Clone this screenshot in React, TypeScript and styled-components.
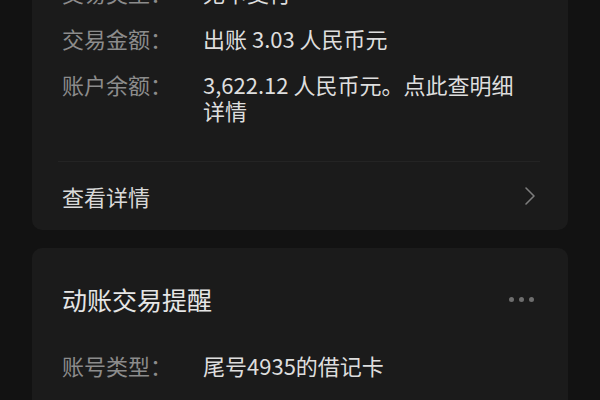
import styled, { createGlobalStyle } from "styled-components";

const GlobalStyle = createGlobalStyle`
  html, body {
    margin: 0;
    padding: 0;
    background: #121212;
  }
  body {
    font-family: "Noto Sans CJK SC", "Noto Sans", sans-serif;
    -webkit-font-smoothing: antialiased;
  }
`;

const Page = styled.div`
  width: 600px;
  height: 400px;
  overflow: hidden;
  background: #121212;
  padding: 0 32px;
  box-sizing: border-box;
  display: flex;
  flex-direction: column;
  gap: 18px;
`;

const Card = styled.section<{ $clipped?: boolean }>`
  background: #1b1b1b;
  border-radius: 10px;
  padding: ${(p) => (p.$clipped ? "0 30px 0" : "36px 30px 60px")};
  margin-top: ${(p) => (p.$clipped ? "-21px" : "0")};
  display: flex;
  flex-direction: column;
  flex-shrink: 0;
`;

const Rows = styled.div`
  display: flex;
  flex-direction: column;
  gap: 20px;
`;

const Row = styled.div`
  display: grid;
  grid-template-columns: 141px 1fr;
  font-size: 22px;
  line-height: 26px;
`;

const Label = styled.span`
  color: #8c8c8c;
`;

const Value = styled.span`
  color: #dedede;
  max-width: 330px;
`;

const Divider = styled.div`
  height: 1px;
  background: #242424;
  margin: 38px -2px 0 -4px;
`;

const Footer = styled.div`
  height: 68px;
  display: flex;
  align-items: center;
  justify-content: space-between;
  padding-right: 2px;
`;

const FooterText = styled.span`
  font-size: 22px;
  color: #d9d9d9;
  line-height: 26px;
`;

const Header = styled.div`
  display: flex;
  align-items: center;
  justify-content: space-between;
  margin-bottom: 38px;
  padding-right: 4px;
`;

const Title = styled.h2`
  margin: 0;
  font-size: 25px;
  font-weight: 400;
  line-height: 30px;
  color: #e6e6e6;
`;

const Dots = styled.div`
  display: flex;
  gap: 5px;
`;

const Dot = styled.span`
  width: 5px;
  height: 5px;
  border-radius: 50%;
  background: #6e6e6e;
`;

const Chevron = () => (
  <svg width="12" height="20" viewBox="0 0 12 20" fill="none">
    <path d="M2 2 L10 10 L2 18" stroke="#7d7d7d" strokeWidth="1.6" strokeLinecap="round" strokeLinejoin="round" />
  </svg>
);

const details = [
  { label: "交易类型：", value: "无卡支付" },
  { label: "交易金额：", value: "出账 3.03 人民币元" },
  { label: "账户余额：", value: "3,622.12 人民币元。点此查明细详情" },
];

const App = () => (
  <>
    <GlobalStyle />
    <Page>
      <Card $clipped>
        <Rows>
          {details.map((d) => (
            <Row key={d.label}>
              <Label>{d.label}</Label>
              <Value>{d.value}</Value>
            </Row>
          ))}
        </Rows>
        <Divider />
        <Footer>
          <FooterText>查看详情</FooterText>
          <Chevron />
        </Footer>
      </Card>
      <Card>
        <Header>
          <Title>动账交易提醒</Title>
          <Dots>
            <Dot />
            <Dot />
            <Dot />
          </Dots>
        </Header>
        <Rows>
          <Row>
            <Label>账号类型：</Label>
            <Value>尾号4935的借记卡</Value>
          </Row>
        </Rows>
      </Card>
    </Page>
  </>
);

export default App;
